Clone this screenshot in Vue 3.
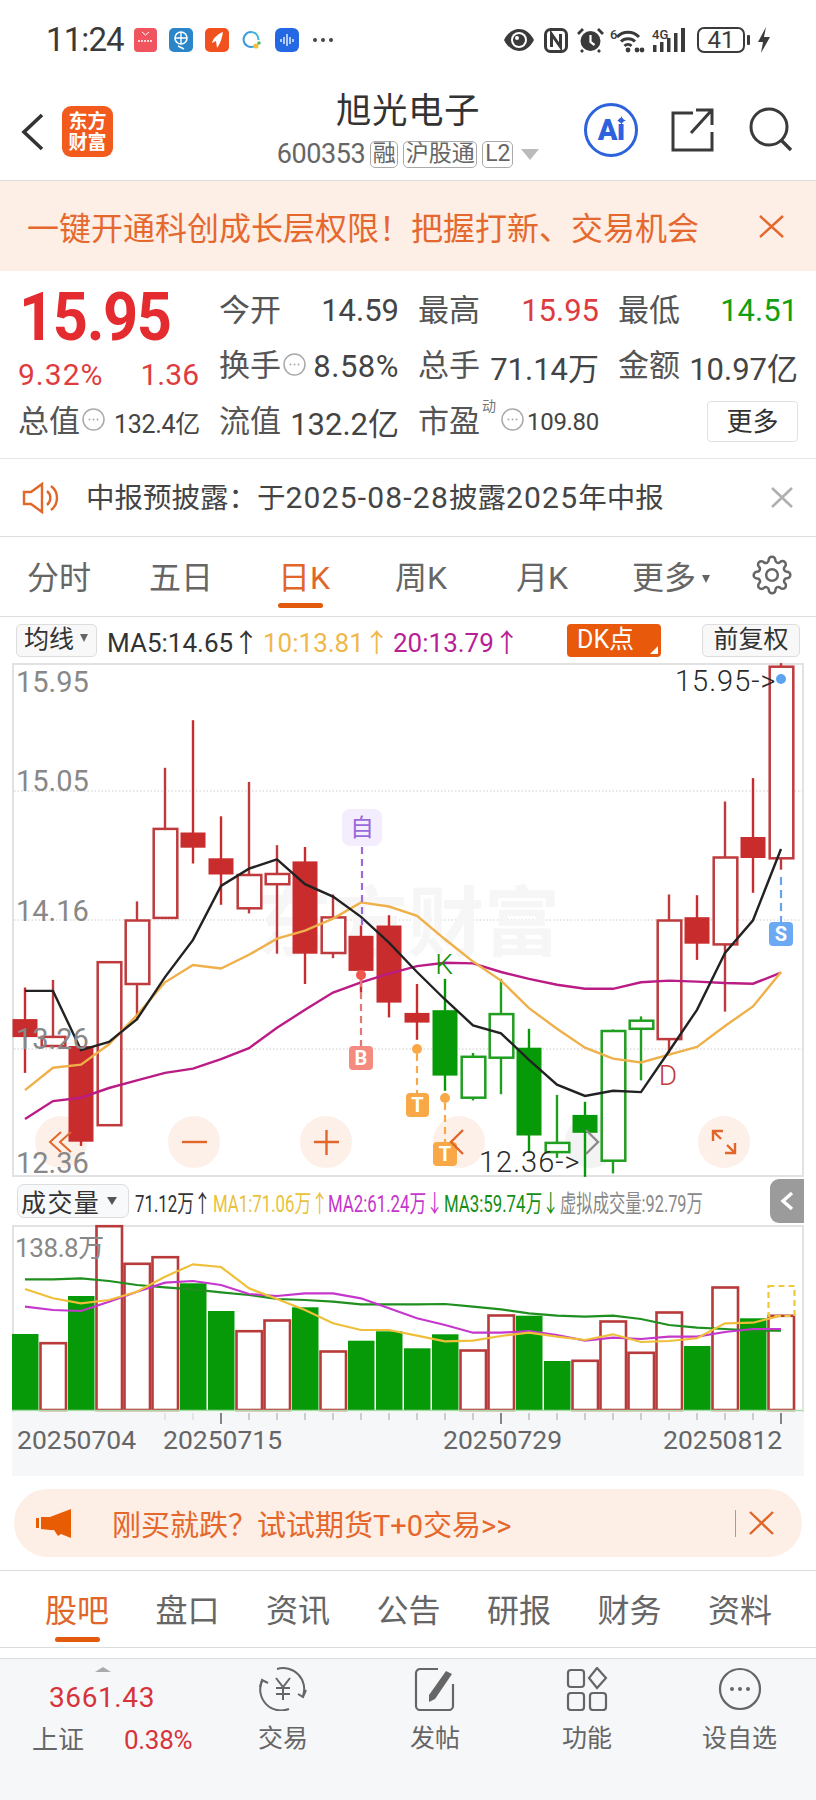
<script setup>
const Y = z => +(650 + z / 2.904).toFixed(1)
const V = z => +(1170 + z / 3).toFixed(1)
const X = i => 25 + 28 * i
const raw = [
  [980,1228,1072,1124,'rs'],[958,1150,1120,1150,'rh'],[1150,1440,1150,1428,'rs'],[903,1382,903,1380,'rh'],
  [730,1075,782,970,'rh'],[342,780,516,778,'rh'],[204,620,530,574,'rs'],[483,740,605,652,'rs'],
  [383,765,650,750,'rh'],[567,882,647,680,'rh'],[572,970,614,882,'rs'],[710,895,773,880,'rh'],
  [800,995,830,932,'rs'],[770,1067,800,1024,'rs'],[970,1132,1054,1082,'rs'],[955,1280,1046,1236,'gs'],
  [1170,1308,1178,1300,'gh'],[955,1290,1054,1184,'gh'],[1100,1460,1155,1410,'gs'],[1292,1475,1428,1458,'gh'],
  [1312,1530,1350,1402,'gs'],[1102,1520,1103,1483,'gh'],[1064,1250,1073,1100,'gh'],[710,1170,782,1130,'rh'],
  [712,900,776,853,'rs'],[440,1050,599,855,'rh'],[372,705,543,604,'rs'],[38,638,45,605,'rh']
]
const colors = { r: '#c92c2c', g: '#069a08' }
const hollowColors = { r: '#bf3a3c', g: '#1f9e1f' }
const candles = raw.map((c, i) => {
  const kind = c[4][0], solid = c[4][1] === 's'
  const inset = solid ? 0 : 1.2
  return {
    x: X(i), hi: Y(c[0]), lo: Y(c[1]),
    bx: X(i) - 12.5 + inset, by: Y(c[2]) + inset,
    bw: 25 - 2 * inset + (solid ? 0 : 1), bh: Y(c[3]) - Y(c[2]) - inset,
    fill: solid ? colors[kind] : '#fff',
    stroke: solid ? colors[kind] : hollowColors[kind],
    wick: solid ? colors[kind] : hollowColors[kind],
    sw: solid ? 0 : 2.5
  }
})
const poly = (arr, f) => arr.map((v, i) => `${X(i)},${f(v)}`).join(' ')
const ma5 = poly([990,990,1162,1138,1072,950,842,685,635,608,680,716,775,850,935,1015,1090,1113,1190,1262,1295,1280,1284,1165,1045,880,785,578], Y)
const ma10 = poly([1278,1213,1204,1145,1060,965,915,925,885,838,815,780,733,745,772,840,905,960,1040,1100,1155,1187,1198,1175,1153,1092,1035,935], Y)
const ma20 = poly([1362,1310,1300,1272,1250,1228,1216,1188,1156,1097,1045,995,965,940,918,908,910,935,955,972,984,984,965,960,963,967,969,937], Y)
const volTops = [492,518,378,167,280,260,340,423,482,450,412,543,512,484,535,493,540,435,437,573,571,453,547,426,528,351,445,436]
const volKinds = 'ghgrrrgghhghgggghhgghhhhghgh'.split('').map(k => (k === 'g' ? 'g' : 'r'))
const bars = volTops.map((t, i) => {
  const solid = volKinds[i] === 'g'
  const top = V(t)
  const left = Math.max(X(i) - 13, 12)
  return solid
    ? { x: left, y: top, w: X(i) + 13.5 - left, h: 1410 - top, fill: '#069a08', stroke: 'none', sw: 0 }
    : { x: left + .5, y: top + .5, w: X(i) + 13.5 - left - 1, h: 1409.5 - top, fill: '#fff', stroke: '#b83a3a', sw: 2.6 }
})
const vma1 = poly([357,385,400,390,365,320,283,291,355,387,420,460,480,480,497,514,512,498,488,500,510,493,516,513,505,460,458,437], V)
const vma2 = poly([410,420,423,395,365,338,333,345,372,378,370,370,385,415,445,465,488,488,483,495,512,503,507,500,500,486,477,477], V)
const vma3 = poly([328,328,325,333,345,352,358,367,375,387,390,395,403,403,403,402,410,418,430,437,440,437,447,465,473,477,482,482], V)
const grid = [791, 920, 1049]
const priceLabels = [['15.95', 692], ['15.05', 791], ['14.16', 921], ['13.26', 1049], ['12.36', 1173]]
const zoomCircles = [[61, '#fdf0e9'], [194, '#fdf0e9'], [326, '#fdf0e9'], [459, '#fdf0e9'], [591, '#f3f3f3'], [724, '#fdf0e9']]
const ticks = Array.from({ length: 28 }, (_, i) => ({
  x: X(i), major: i === 7 || i === 17 || i === 27, hide: i < 5,
  faint: i === 5 || i === 6
}))
const dates = [['20250704', 17], ['20250715', 163], ['20250729', 443], ['20250812', 663]]
const topTabs = ['分时', '五日', '日K', '周K', '月K']
const bottomTabs = ['股吧', '盘口', '资讯', '公告', '研报', '财务', '资料']
const gear = 'M19.4 15a1.65 1.65 0 0 0 .33 1.82l.06.06a2 2 0 0 1 0 2.83 2 2 0 0 1-2.83 0l-.06-.06a1.65 1.65 0 0 0-1.82-.33 1.65 1.65 0 0 0-1 1.51V21a2 2 0 0 1-2 2 2 2 0 0 1-2-2v-.09A1.65 1.65 0 0 0 9 19.4a1.65 1.65 0 0 0-1.82.33l-.06.06a2 2 0 0 1-2.83 0 2 2 0 0 1 0-2.83l.06-.06a1.65 1.65 0 0 0 .33-1.82 1.65 1.65 0 0 0-1.51-1H3a2 2 0 0 1-2-2 2 2 0 0 1 2-2h.09A1.65 1.65 0 0 0 4.6 9a1.65 1.65 0 0 0-.33-1.82l-.06-.06a2 2 0 0 1 0-2.83 2 2 0 0 1 2.83 0l.06.06a1.65 1.65 0 0 0 1.82.33H9a1.65 1.65 0 0 0 1-1.51V3a2 2 0 0 1 2-2 2 2 0 0 1 2 2v.09a1.65 1.65 0 0 0 1 1.51 1.65 1.65 0 0 0 1.82-.33l.06-.06a2 2 0 0 1 2.83 0 2 2 0 0 1 0 2.83l-.06.06a1.65 1.65 0 0 0-.33 1.82V9a1.65 1.65 0 0 0 1.51 1H21a2 2 0 0 1 2 2 2 2 0 0 1-2 2h-.09a1.65 1.65 0 0 0-1.51 1z'
</script>

<template>
  <div class="page">
    <!-- status bar -->
    <div class="status">
      <span class="time">11:24</span>
      <svg class="app a1" viewBox="0 0 23 24"><rect width="23" height="24" rx="4" fill="#f0555f"/><path d="M8 4l3.5 3L15 4" fill="none" stroke="#fff" stroke-width="1"/><path d="M4 13h15" stroke="#fff" stroke-width="1.6" stroke-dasharray="2 1"/></svg>
      <svg class="app a2" viewBox="0 0 24 24"><rect width="24" height="24" rx="5" fill="#2a86c8"/><circle cx="12" cy="10" r="6" fill="none" stroke="#fff" stroke-width="1.6"/><path d="M6 10h12M12 4v12M9 18l6 3" stroke="#fff" stroke-width="1.4"/></svg>
      <svg class="app a3" viewBox="0 0 24 24"><rect width="24" height="24" rx="5" fill="#f0511e"/><path d="M7 15c1-5 6-9 11-11-1 5-2 11-6 16l-1-7z" fill="#fff"/></svg>
      <svg class="app a4" viewBox="0 0 20 24"><path d="M10 4a7.5 7.5 0 1 0 3 14.4" fill="none" stroke="#3d9be0" stroke-width="2"/><path d="M10 4a7.5 7.5 0 0 1 7.5 8" fill="none" stroke="#44b3d8" stroke-width="2"/><circle cx="15" cy="18" r="2.6" fill="#f2c23c"/><circle cx="18" cy="15" r="1.8" fill="#55b96a"/></svg>
      <svg class="app a5" viewBox="0 0 24 24"><rect width="24" height="24" rx="6" fill="#2468e4"/><path d="M6 11v3M9 9v7M12 6v12M15 9v7M18 11v3" stroke="#fff" stroke-width="1.3"/></svg>
      <span class="more-dots"><i></i><i></i><i></i></span>
      <div class="status-right">
        <svg width="32" height="24" viewBox="0 0 32 24"><path d="M1 12C5 4 11 1 16 1s11 3 15 11c-4 8-10 11-15 11S5 20 1 12z" fill="#3a3a3a"/><circle cx="16" cy="12" r="8" fill="#fff"/><circle cx="16" cy="12" r="6" fill="#3a3a3a"/><circle cx="14" cy="10" r="2" fill="#fff"/></svg>
        <svg class="s-n" width="24" height="25" viewBox="0 0 24 25"><rect x="1.500" y="1.500" width="21" height="22" rx="5" fill="none" stroke="#3a3a3a" stroke-width="3"/><path d="M7.500 19V6l9 13V6" fill="none" stroke="#3a3a3a" stroke-width="3"/></svg>
        <svg class="s-a" width="27" height="26" viewBox="0 0 27 26"><circle cx="13.5" cy="14" r="10" fill="#3a3a3a"/><path d="M13.5 8v7l4 3" fill="none" stroke="#fff" stroke-width="2.200"/><path d="M1 7l5-5M26 7l-5-5M6 23l-2 2M21 23l2 2" stroke="#3a3a3a" stroke-width="2.800"/></svg>
        <svg class="s-w" width="35" height="26" viewBox="0 0 35 26"><text x="0" y="12" class="s-tiny">6</text><path d="M7 10a15 15 0 0 1 22 0M11 14.500a10 10 0 0 1 14 0M14.500 19a5 5 0 0 1 7 0" fill="none" stroke="#3a3a3a" stroke-width="3"/><circle cx="18" cy="23" r="2.400" fill="#3a3a3a"/><circle cx="27" cy="23" r="2.400" fill="#3a3a3a"/><circle cx="32" cy="23" r="2.400" fill="#3a3a3a"/></svg>
        <svg class="s-s" width="37" height="26" viewBox="0 0 37 26"><text x="0" y="12" class="s-tiny">4G</text><rect x="1" y="18" width="3.500" height="7" fill="#3a3a3a"/><rect x="8" y="15" width="3.500" height="10" fill="#3a3a3a"/><rect x="15" y="11" width="3.500" height="14" fill="#3a3a3a"/><rect x="22" y="6" width="3.500" height="19" fill="#3a3a3a"/><rect x="29" y="1" width="4" height="24" fill="#3a3a3a"/></svg>
        <span class="batt">41</span><i class="batt-tip"></i>
        <svg class="s-b" width="12" height="26" viewBox="0 0 12 26"><path d="M8 0L0 15h5l-2 11 9-16H6z" fill="#3a3a3a"/></svg>
      </div>
    </div>

    <!-- header -->
    <header class="head">
      <div class="head-left">
        <svg width="23" height="38" viewBox="0 0 23 38"><path d="M21 2L3 19l18 17" fill="none" stroke="#333" stroke-width="3.600"/></svg>
        <div class="logo"><span>东方</span><span>财富</span></div>
      </div>
      <div class="head-mid">
        <div class="title">旭光电子</div>
        <div class="code">
          <span class="code-num">600353</span>
          <span class="tag t1">融</span>
          <span class="tag t2">沪股通</span>
          <span class="tag t3">L2</span>
          <i class="tri"></i>
        </div>
      </div>
      <div class="head-right">
        <div class="ai"><b>Ai</b><svg class="spark" width="9" height="9" viewBox="0 0 10 10"><path d="M5 0l1.400 3.600L10 5 6.400 6.400 5 10 3.600 6.400 0 5l3.600-1.400z" fill="#2c62dc"/></svg></div>
        <svg class="share" width="43" height="44" viewBox="0 0 43 44"><path d="M22 5H2v37h39V24M20 25L40 3M25 2h16v15" fill="none" stroke="#3a3a3a" stroke-width="3"/></svg>
        <svg class="search" width="44" height="45" viewBox="0 0 44 45"><circle cx="20" cy="20" r="18" fill="none" stroke="#3a3a3a" stroke-width="3"/><path d="M32 33l10 10" stroke="#3a3a3a" stroke-width="3.400"/></svg>
      </div>
    </header>

    <!-- banner -->
    <div class="banner">
      <span>一键开通科创成长层权限！把握打新、交易机会</span>
      <svg width="25" height="23" viewBox="0 0 25 23"><path d="M1 1l23 21M24 1L1 22" stroke="#e5672b" stroke-width="2.400"/></svg>
    </div>

    <!-- quote -->
    <section class="quote">
      <div class="big">15.95</div>
      <div class="stat"><label>今开</label><em>14.59</em></div>
      <div class="stat"><label>最高</label><em class="red">15.95</em></div>
      <div class="stat"><label>最低</label><em class="green">14.51</em></div>

      <div class="pct"><span class="pct-a">9.32%</span><span>1.36</span></div>
      <div class="stat"><label>换手</label><svg class="info" viewBox="0 0 23 23"><circle cx="11.500" cy="11.500" r="10.500" fill="none" stroke="#aaa" stroke-width="1.500"/><circle cx="7.500" cy="11.500" r="1" fill="#aaa"/><circle cx="11.500" cy="11.500" r="1" fill="#aaa"/><circle cx="15.500" cy="11.500" r="1" fill="#aaa"/></svg><em class="wide">8.58%</em></div>
      <div class="stat"><label>总手</label><em>71.14万</em></div>
      <div class="stat"><label>金额</label><em>10.97亿</em></div>

      <div class="stat small-stat"><label>总值</label><svg class="info" viewBox="0 0 23 23"><circle cx="11.500" cy="11.500" r="10.500" fill="none" stroke="#aaa" stroke-width="1.500"/><circle cx="7.500" cy="11.500" r="1" fill="#aaa"/><circle cx="11.500" cy="11.500" r="1" fill="#aaa"/><circle cx="15.500" cy="11.500" r="1" fill="#aaa"/></svg><em>132.4亿</em></div>
      <div class="stat"><label>流值</label><em>132.2亿</em></div>
      <div class="stat small-stat pe"><label>市盈</label><sup>动</sup><svg class="info" viewBox="0 0 23 23"><circle cx="11.500" cy="11.500" r="10.500" fill="none" stroke="#aaa" stroke-width="1.500"/><circle cx="7.500" cy="11.500" r="1" fill="#aaa"/><circle cx="11.500" cy="11.500" r="1" fill="#aaa"/><circle cx="15.500" cy="11.500" r="1" fill="#aaa"/></svg><em>109.80</em></div>
      <div class="more-cell"><button class="more-btn">更多</button></div>
    </section>

    <!-- notice -->
    <div class="notice">
      <svg width="38" height="32" viewBox="0 0 38 32"><path d="M2 10h7l11-8v28L9 22H2z" fill="none" stroke="#e0662a" stroke-width="2.400"/><path d="M25 9a9 9 0 0 1 0 14M29 4a15 15 0 0 1 0 24" fill="none" stroke="#e0662a" stroke-width="2.400"/></svg>
      <span class="notice-text">中报预披露：于<span class="n">2025-08-28</span>披露<span class="n">2025</span>年中报</span>
      <svg class="notice-x" width="22" height="21" viewBox="0 0 22 21"><path d="M1 1l20 19M21 1L1 20" stroke="#b0b0b0" stroke-width="2.600"/></svg>
    </div>

    <!-- period tabs -->
    <nav class="ptabs">
      <div v-for="(t, i) in topTabs" :key="t" class="ptab" :class="{ on: i === 2 }">
        <span>{{ t }}</span><i v-if="i === 2"></i>
      </div>
      <div class="ptab">
        <span>更多<b class="mini-tri"></b></span>
      </div>
      <svg class="gear" width="40" height="40" viewBox="0 0 24 24"><circle cx="12" cy="12" r="3.500" fill="none" stroke="#666" stroke-width="1.500"/><path :d="gear" fill="none" stroke="#666" stroke-width="1.500"/></svg>
    </nav>

    <!-- MA legend -->
    <div class="ma-row">
      <div class="chip"><span>均线</span><b class="mini-tri"></b></div>
      <span class="ma m1">MA5:14.65↑</span>
      <span class="ma m2">10:13.81↑</span>
      <span class="ma m3">20:13.79↑</span>
      <div class="dk"><span>DK点</span><i></i></div>
      <div class="fq">前复权</div>
    </div>

    <!-- K chart -->
    <svg class="kchart" width="816" height="514" viewBox="0 663 816 514">
      <rect x="13" y="664" width="790" height="512" fill="#fff" stroke="#e2e2e2" stroke-width="2"/>
      <line v-for="g in grid" :key="g" x1="14" x2="802" :y1="g" :y2="g" stroke="#ccc" stroke-width="1" stroke-dasharray="1.500 2"/>
      <text class="wm" x="256" y="950">东方财富</text>
      <circle v-for="c in zoomCircles" :key="c[0]" :cx="c[0]" cy="1142" r="26" :fill="c[1]"/>
      <g v-for="(c, i) in candles" :key="i">
        <line :x1="c.x" :x2="c.x" :y1="c.hi" :y2="c.lo" :stroke="c.wick" stroke-width="2.400"/>
        <rect :x="c.bx" :y="c.by" :width="c.bw" :height="c.bh" :fill="c.fill" :stroke="c.stroke" :stroke-width="c.sw"/>
      </g>
      <polyline :points="ma20" fill="none" stroke="#bb1b85" stroke-width="2.400"/>
      <polyline :points="ma10" fill="none" stroke="#efb04a" stroke-width="2.400"/>
      <polyline :points="ma5" fill="none" stroke="#222" stroke-width="2.400"/>
      <text v-for="p in priceLabels" :key="p[0]" class="plabel" x="16" :y="p[1]">{{ p[0] }}</text>

      <!-- markers -->
      <rect x="342" y="809" width="40" height="37" rx="8" fill="#f3edfe"/>
      <text class="mk mk-self" x="362" y="836">自</text>
      <line x1="362" x2="362" y1="847" y2="925" stroke="#9a6ad8" stroke-width="2.200" stroke-dasharray="7 5"/>
      <circle cx="361" cy="975" r="5" fill="#f0564b"/>
      <line x1="361" x2="361" y1="980" y2="1046" stroke="#e07a70" stroke-width="2.200" stroke-dasharray="7 5"/>
      <rect x="349" y="1046" width="24" height="24" rx="4" fill="#f58b80"/>
      <text class="mk mk-l" x="361" y="1065">B</text>
      <circle cx="417" cy="1049" r="5" fill="#f9a848"/>
      <line x1="417" x2="417" y1="1054" y2="1093" stroke="#f9a848" stroke-width="2.200" stroke-dasharray="7 5"/>
      <rect x="406" y="1093" width="23" height="24" rx="4" fill="#f9a848"/>
      <text class="mk mk-l" x="417.500" y="1112">T</text>
      <circle cx="445" cy="1098" r="5" fill="#f9a848"/>
      <line x1="445" x2="445" y1="1103" y2="1142" stroke="#f9a848" stroke-width="2.200" stroke-dasharray="7 5"/>
      <rect x="433" y="1142" width="24" height="24" rx="4" fill="#f9a848"/>
      <text class="mk mk-l" x="445" y="1161">T</text>
      <line x1="781" x2="781" y1="877" y2="922" stroke="#6aa4e8" stroke-width="2.200" stroke-dasharray="8 5"/>
      <rect x="769" y="922" width="24" height="24" rx="4" fill="#6ba9f2"/>
      <text class="mk mk-l" x="781" y="941">S</text>
      <text class="kd kd-k" x="444" y="974">K</text>
      <text class="kd kd-d" x="668" y="1085">D</text>
      <text class="price-tag" x="675" y="691">15.95-&gt;</text>
      <text class="price-tag" x="479" y="1172">12.36-&gt;</text>
      <circle cx="781" cy="679" r="5" fill="#5ba3f0"/>

      <!-- zoom buttons glyphs -->
      <path d="M61 1132l-11 10 11 10M71 1132l-11 10 11 10" fill="none" stroke="#e0662a" stroke-width="2"/>
      <path d="M182 1142h25" stroke="#e0662a" stroke-width="2.400"/>
      <path d="M314 1142h25M326.500 1130v25" stroke="#e0662a" stroke-width="2.400"/>
      <path d="M463 1130l-12 12 12 12" fill="none" stroke="#e0662a" stroke-width="2.400"/>
      <path d="M586 1130l12 12-12 12" fill="none" stroke="#8a8a8a" stroke-width="2.400"/>
      <path d="M713 1131l8 8M735 1153l-8-8M713 1141v-10h10M735 1143v10h-10" fill="none" stroke="#e0662a" stroke-width="2.400"/>
    </svg>

    <!-- volume legend -->
    <div class="vol-row">
      <div class="vol-chip"><span>成交量</span><b></b></div>
      <div class="vt v0"><span>71.12万↑</span></div>
      <div class="vt v1"><span>MA1:71.06万↑</span></div>
      <div class="vt v2"><span>MA2:61.24万↓</span></div>
      <div class="vt v3"><span>MA3:59.74万↓</span></div>
      <div class="vt v4"><span>虚拟成交量:92.79万</span></div>
      <div class="vol-tab"><svg width="14" height="20" viewBox="0 0 14 20"><path d="M12 2L3 10l9 8" fill="none" stroke="#fff" stroke-width="3.400"/></svg></div>
    </div>

    <!-- volume chart -->
    <svg class="vchart" width="816" height="187" viewBox="0 1225 816 187">
      <path d="M13 1412V1226H803V1412" fill="#fff" stroke="#e2e2e2" stroke-width="2"/>
      <rect v-for="(b, i) in bars" :key="i" :x="b.x" :y="b.y" :width="b.w" :height="b.h" :fill="b.fill" :stroke="b.stroke" :stroke-width="b.sw"/>
      <rect x="768.500" y="1286" width="26" height="30" fill="none" stroke="#efc93c" stroke-width="2.200" stroke-dasharray="6 4"/>
      <line x1="12" x2="803" y1="1410.500" y2="1410.500" stroke="#a9dba9" stroke-width="1.500"/>
      <polyline :points="vma3" fill="none" stroke="#1f8f1f" stroke-width="2.200"/>
      <polyline :points="vma2" fill="none" stroke="#c536cc" stroke-width="2.200"/>
      <polyline :points="vma1" fill="none" stroke="#efbf3a" stroke-width="2.200"/>
      <text class="plabel vl" x="15" y="1257">138.8万</text>
    </svg>

    <!-- date axis -->
    <svg class="axis" width="816" height="64" viewBox="0 1412 816 64">
      <rect x="12" y="1412" width="792" height="64" fill="#f6f7f9"/>
      <g v-for="t in ticks" :key="t.x">
        <line v-if="!t.hide" :x1="t.x" :x2="t.x" y1="1413" :y2="t.major ? 1424 : 1420" :stroke="t.major ? '#666' : (t.faint ? '#ddd' : '#bbb')" :stroke-width="t.major ? 1.600 : 1.400"/>
      </g>
      <text v-for="d in dates" :key="d[0]" class="dlabel" :x="d[1]" y="1449">{{ d[0] }}</text>
    </svg>

    <!-- promo -->
    <div class="promo">
      <svg width="36" height="30" viewBox="0 0 36 30"><rect x="0" y="10" width="3" height="10" fill="#e85d04"/><path d="M5 9h9L35 1v29l-10-4-3 2-4-6h-4l-9-1z" fill="#e85d04"/></svg>
      <span class="promo-text">刚买就跌？试试期货T+0交易&gt;&gt;</span>
      <i class="promo-div"></i>
      <svg width="25" height="24" viewBox="0 0 25 24"><path d="M1 1l23 22M24 1L1 23" stroke="#e0662a" stroke-width="2.400"/></svg>
    </div>

    <!-- detail tabs -->
    <nav class="dtabs">
      <div v-for="(t, i) in bottomTabs" :key="t" class="dtab" :class="{ on: i === 0 }">
        <span>{{ t }}</span><i v-if="i === 0"></i>
      </div>
    </nav>
    <div class="spacer"></div>

    <!-- bottom bar -->
    <footer class="foot">
      <div class="index">
        <i class="up"></i>
        <div class="idx-val">3661.43</div>
        <div class="idx-row"><span class="idx-name">上证</span><span class="idx-pct">0.38%</span></div>
      </div>
      <div class="fitem">
        <svg width="48" height="44" viewBox="0 0 48 44"><path d="M18 2A21 21 0 0 1 44 29M3 14A21 21 0 0 0 30 42" fill="none" stroke="#666" stroke-width="2"/><path d="M1 20l2-7 6 3M39 27l5 3 3-7" fill="none" stroke="#666" stroke-width="2"/><path d="M17 11l7 9 7-9M24 20v13M17 21h14M17 27h14" fill="none" stroke="#666" stroke-width="2"/></svg>
        <span>交易</span>
      </div>
      <div class="fitem">
        <svg width="42" height="44" viewBox="0 0 42 44"><path d="M24 2H6a4 4 0 0 0-4 4v33a4 4 0 0 0 4 4h29a4 4 0 0 0 4-4V17" fill="none" stroke="#666" stroke-width="2.200"/><path d="M15 28L32 4l6 3-17 25-6 3z" fill="#666"/></svg>
        <span>发帖</span>
      </div>
      <div class="fitem">
        <svg width="42" height="44" viewBox="0 0 42 44"><rect x="2" y="3" width="16" height="17" rx="3" fill="none" stroke="#666" stroke-width="2.200"/><rect x="2" y="26" width="16" height="17" rx="3" fill="none" stroke="#666" stroke-width="2.200"/><rect x="24" y="26" width="16" height="17" rx="3" fill="none" stroke="#666" stroke-width="2.200"/><path d="M31 1l9 10-9 10-8-10z" fill="none" stroke="#666" stroke-width="2.200"/></svg>
        <span>功能</span>
      </div>
      <div class="fitem">
        <svg width="44" height="44" viewBox="0 0 44 44"><circle cx="22" cy="22" r="20" fill="none" stroke="#666" stroke-width="2.200"/><circle cx="14" cy="22" r="2" fill="#666"/><circle cx="22" cy="22" r="2" fill="#666"/><circle cx="30" cy="22" r="2" fill="#666"/></svg>
        <span>设自选</span>
      </div>
    </footer>
  </div>
</template>

<style>
html, body { margin: 0; background: #fff; }
</style>

<style scoped>
.page {
  width: 816px;
  height: 1800px;
  overflow: hidden;
  background: #fff;
  font-family: Roboto, "Noto Sans CJK SC", sans-serif;
  color: #333;
}
svg { display: block; flex: none; }

/* status */
.status { height: 70px; box-sizing: border-box; display: flex; align-items: center; padding: 10px 0 0 46px; }
.time { font-size: 33px; letter-spacing: -.9px; color: #3a3a3a; width: 88px; line-height: 40px; }
.app { width: 23px; height: 24px; margin-right: 12px; }
.a2, .a3, .a5 { width: 24px; }
.a4 { width: 20px; margin-right: 14px; }
.more-dots { display: flex; gap: 4px; margin-left: 2px; }
.more-dots i { width: 4px; height: 4px; border-radius: 50%; background: #444; }
.status-right { margin-left: auto; width: 313px; display: flex; align-items: center; }
.s-n { margin-left: 9px; }
.s-a { margin-left: 9px; }
.s-w { margin-left: 6px; }
.s-s { margin-left: 7px; }
.s-tiny { font-size: 13px; fill: #3a3a3a; font-weight: 500; }
.batt { margin-left: 8px; width: 48px; height: 26px; box-sizing: border-box; border: 2px solid #3a3a3a; border-radius: 7px; font-size: 24px; line-height: 22px; text-align: center; color: #3a3a3a; }
.batt-tip { width: 3px; height: 10px; margin-left: 2px; background: #3a3a3a; border-radius: 1px; }
.s-b { margin-left: 8px; }

/* header */
.head { height: 111px; box-sizing: border-box; border-bottom: 1px solid #dcdcdc; display: grid; grid-template-columns: 1fr auto 1fr; align-items: center; }
.head-left { display: flex; align-items: center; padding: 13px 0 0 21px; gap: 18px; }
.logo { width: 51px; height: 51px; border-radius: 9px; background: #f25a1e; color: #fff; display: flex; flex-direction: column; align-items: center; justify-content: center; font-size: 19px; font-weight: 700; line-height: 21px; }
.head-mid { text-align: center; margin-top: 6px; }
.title { font-size: 35.500px; line-height: 44px; color: #333; letter-spacing: .5px; }
.code { display: flex; align-items: center; height: 27px; margin-top: 8px; gap: 5px; color: #666; }
.code-num { font-size: 27px; letter-spacing: -.4px; }
.tag { box-sizing: border-box; height: 27px; padding: 0; border: 1px solid #aaa; border-radius: 5px; font-size: 23px; line-height: 23px; text-align: center; color: #666; }
.t1 { width: 28px; }
.t2 { width: 74px; }
.t3 { width: 31px; }
.tri { width: 0; height: 0; margin-left: 3px; border-left: 9px solid transparent; border-right: 9px solid transparent; border-top: 11px solid #bbb; }
.head-right { display: flex; align-items: center; justify-content: flex-end; padding-right: 23px; margin-top: 9px; }
.ai { position: relative; width: 54px; height: 54px; box-sizing: border-box; border: 3px solid #2c62dc; border-radius: 50%; color: #2c62dc; display: flex; align-items: center; justify-content: center; margin-right: 33px; }
.ai b { font-size: 29px; font-weight: 900; letter-spacing: -.5px; }
.spark { position: absolute; right: 9px; top: 10px; }
.share { margin-right: 35px; }

/* banner */
.banner { height: 90px; background: #fdeee6; display: flex; align-items: center; justify-content: space-between; padding: 0 32px 0 27px; color: #e5692e; font-size: 32px; }

/* quote */
.quote { height: 188px; box-sizing: border-box; padding: 12px 0 0 18px; display: grid; grid-template-columns: 182px 180px 181px 180px; grid-template-rows: repeat(3, 55.5px); column-gap: 19px; align-items: center; border-bottom: 1px solid #e5e5e5; }
.big { font-size: 66px; font-weight: 700; color: #e32b30; letter-spacing: -1.500px; line-height: 60px; margin: 14px 0 0 1px; transform: scaleX(.93); transform-origin: left center; }
.pct { display: flex; justify-content: space-between; font-size: 30px; color: #df3c3f; margin: 18px 0 0 0; line-height: 36px; padding-right: 1px; }
.pct-a { letter-spacing: 1px; }
.stat { display: flex; align-items: center; height: 44px; }
.stat label { font-size: 31px; color: #555; line-height: 44px; }
.stat em { margin-left: auto; font-style: normal; font-size: 31px; color: #444; }
.stat em.red { color: #df3c3f; }
.stat em.green { color: #12a012; }
.stat em.wide { letter-spacing: .5px; }
.info { width: 23px; height: 23px; margin: -4px 0 0 2px; }
.small-stat em { font-size: 25px; letter-spacing: -.3px; }
.pe em { font-size: 24px; }
.small-stat sup { font-size: 14px; color: #777; align-self: flex-start; line-height: 16px; margin: -2px -15px 0 2px; width: 15px; }
.small-stat sup + .info { margin-left: 19px; }
.more-cell { display: flex; justify-content: flex-end; }
.more-btn { width: 91px; height: 41px; box-sizing: border-box; background: #fff; border: 1px solid #e2e2e2; border-radius: 4px; font: inherit; font-size: 26px; line-height: 36px; padding: 0; color: #333; }

/* notice */
.notice { height: 78px; display: flex; align-items: center; padding: 0 23px 0 22px; border-bottom: 1px solid #dedede; box-sizing: border-box; }
.notice-text { margin-left: 26px; font-size: 28.500px; color: #444; margin-top: -4px; }
.n { font-size: 30px; letter-spacing: 1.200px; }
.notice-x { margin-left: auto; }

/* period tabs */
.ptabs { height: 80px; box-sizing: border-box; border-bottom: 1px solid #dedede; padding: 21px 0 0 27px; display: grid; grid-template-columns: 122px 129px 117px 121px 116px 120px 40px; color: #666; }
.ptab { font-size: 32px; line-height: 40px; white-space: nowrap; }
.ptab.on { color: #e0662a; }
.ptab i { display: block; width: 45px; height: 5px; margin-top: 5px; border-radius: 3px; background: #e25a0c; }
.gear { margin-top: -3px; }
.mini-tri { display: inline-block; width: 0; height: 0; margin-left: 6px; vertical-align: 6px; border-left: 4.500px solid transparent; border-right: 4.500px solid transparent; border-top: 8px solid #666; }

/* MA legend */
.ma-row { height: 46px; display: flex; align-items: center; padding-left: 16px; position: relative; font-size: 26px; }
.chip { box-sizing: border-box; width: 81px; height: 33px; border: 1px solid #ddd; border-radius: 5px; background: #f8f8f8; font-size: 25px; line-height: 30px; padding-left: 7px; white-space: nowrap; color: #333; }
.ma { white-space: nowrap; letter-spacing: 0; }
.m1 { width: 156px; margin-left: 10px; color: #333; }
.m2 { width: 130px; color: #efb84a; }
.m3 { width: 174px; color: #b61f96; }
.dk { position: relative; box-sizing: border-box; width: 94px; height: 33px; background: #e8590c; border-radius: 4px; color: #fff; font-size: 25px; line-height: 32px; padding-left: 10px; white-space: nowrap; }
.dk i { position: absolute; right: 3px; bottom: 3px; width: 0; height: 0; border-left: 8px solid transparent; border-bottom: 8px solid #fff; }
.fq { box-sizing: border-box; width: 98px; height: 33px; margin-left: 41px; border: 1px solid #ddd; border-radius: 5px; background: #f8f8f8; font-size: 25px; line-height: 30px; text-align: center; color: #333; }

/* chart */
.kchart, .vchart, .axis { display: block; overflow: visible; }
.wm { font-size: 76px; fill: #f6f6f6; font-weight: 700; }
.plabel { font-size: 29px; fill: #888; }
.vl { font-size: 26px; letter-spacing: -.4px; }
.mk { text-anchor: middle; fill: #fff; }
.mk-self { font-size: 24px; fill: #9a6ad8; }
.mk-l { font-size: 20px; font-weight: 700; }
.kd { text-anchor: middle; font-size: 28px; font-weight: 300; }
.kd-k { fill: #0a8f0a; }
.kd-d { fill: #c23b3b; }
.price-tag { font-size: 29px; fill: #2a2a2a; letter-spacing: 1px; font-weight: 300; }

/* volume legend */
.vol-row { height: 48px; display: flex; align-items: center; padding-left: 17px; font-size: 24px; }
.vol-chip { box-sizing: border-box; width: 112px; height: 34px; border: 1px solid #ddd; border-radius: 7px; background: #f8f9fa; display: flex; align-items: center; padding-left: 3px; font-size: 25px; color: #333; letter-spacing: 1.400px; margin-right: 6px; }
.vol-chip b { width: 0; height: 0; margin-left: 7px; border-left: 5px solid transparent; border-right: 5px solid transparent; border-top: 8px solid #555; }
.vt { flex: none; white-space: nowrap; }
.vt span { display: inline-block; transform: scaleX(.7); transform-origin: left center; }
.v0 { width: 78px; color: #333; }
.v1 { width: 115px; color: #e8c23a; }
.v2 { width: 116px; color: #c536cc; }
.v3 { width: 116px; color: #148f14; }
.v4 { width: 210px; color: #888; }
.v4 span { transform: scaleX(.68); }
.vol-tab { width: 34px; height: 44px; background: #9b9b9b; border-radius: 9px 0 0 9px; display: flex; align-items: center; justify-content: center; flex: none; }
.dlabel { font-size: 26.500px; fill: #666; }

/* promo */
.promo { margin: 13px 14px 0; height: 68px; border-radius: 34px; background: #fdeee6; display: flex; align-items: center; padding: 0 28px 0 22px; color: #e5672b; }
.promo-text { margin-left: 40px; font-size: 29px; white-space: nowrap; }
.promo-div { width: 1px; height: 27px; margin-left: auto; margin-right: 13px; background: #c9936f; }

/* detail tabs */
.dtabs { margin-top: 13px; height: 78px; box-sizing: border-box; padding: 19px 0 0 45px; border-top: 1px solid #dcdcdc; border-bottom: 1px solid #dcdcdc; display: flex; gap: 46.500px; color: #666; font-size: 32px; }
.dtab { width: 64px; text-align: center; line-height: 42px; white-space: nowrap; }
.dtab.on { color: #e0662a; }
.dtab i { display: block; width: 45px; height: 5px; margin: 5px auto 0; border-radius: 3px; background: #e25a0c; }
.spacer { height: 10px; background: #fff; }

/* footer */
.foot { height: 142px; box-sizing: border-box; border-top: 1px solid #dcdcdc; background: #f6f7f9; display: grid; grid-template-columns: 207px 152px 152px 152px 153px; }
.index { position: relative; }
.up { display: block; width: 0; height: 0; margin: 8px 0 0 95px; border-left: 8px solid transparent; border-right: 8px solid transparent; border-bottom: 5px solid #aaa; }
.idx-val { margin: 10px 0 0 49px; font-size: 28px; letter-spacing: .6px; color: #d6343a; line-height: 32px; }
.idx-row { margin-top: 8px; padding-left: 32px; display: flex; align-items: center; font-size: 26px; line-height: 36px; }
.idx-name { width: 92px; color: #666; }
.idx-pct { color: #d6343a; letter-spacing: -.3px; }
.fitem { display: flex; flex-direction: column; align-items: center; padding-top: 8px; font-size: 25px; color: #666; line-height: 34px; }
.fitem span { margin-top: 11px; }
</style>
